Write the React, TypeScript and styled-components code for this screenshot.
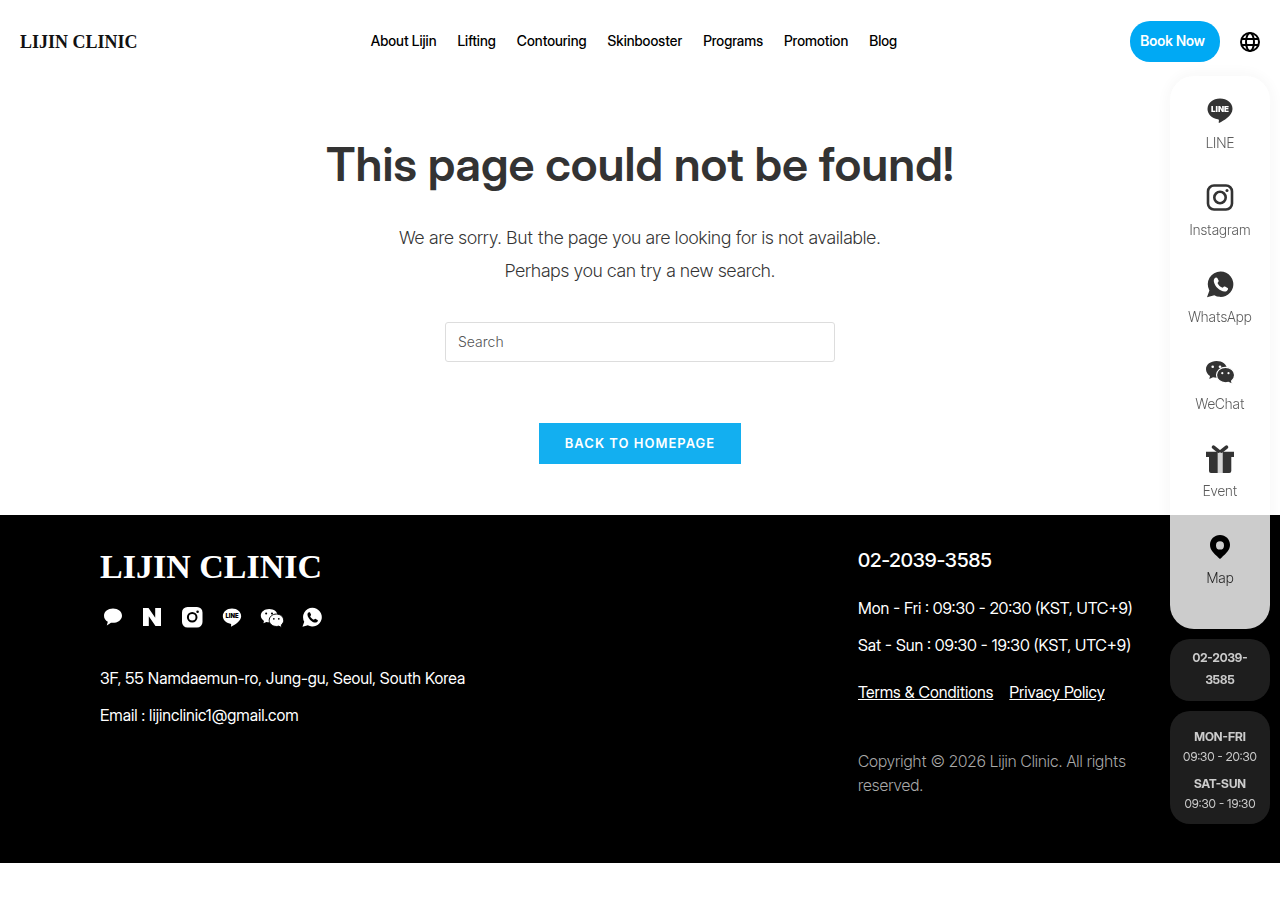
import React from "react";
import styled, { createGlobalStyle, css } from "styled-components";
import { SiNaver } from "react-icons/si";

const textFace = css`font-family: Inter, "Liberation Sans", sans-serif;`;
const lightFace = css`font-family: "Inter Tight", Inter, "Liberation Sans", sans-serif;`;

const GlobalStyle = createGlobalStyle`
  *, *::before, *::after { box-sizing: border-box; }
  body {
    margin: 0;
    background: #fff;
    color: #333;
    font-family: "Inter Display", Inter, "Liberation Sans", sans-serif;
    font-size: 16px;
    font-weight: 400;
  }
  a { color: inherit; text-decoration: none; }
  p, h1, ul { margin: 0; padding: 0; }
  svg { display: block; }
`;

const Header = styled.header`
  display: flex;
  align-items: center;
  justify-content: space-between;
  height: 83px;
  padding: 0 20px;
`;

const Wordmark = styled.a<{ $large?: boolean }>`
  font-family: "Liberation Serif", serif;
  font-weight: 700;
  white-space: nowrap;
  ${({ $large }) =>
    $large
      ? css`
          display: block;
          font-size: 34px;
          line-height: 40px;
          color: #fff;
        `
      : css`
          font-size: 18px;
          line-height: 24px;
          color: #111;
        `}
`;

const Nav = styled.nav`
  display: flex;
  gap: 21px;
  padding-bottom: 1px;
`;

const NavLink = styled.a`
  color: #000;
  font-size: 14px;
  font-weight: 500;
  line-height: 20px;
  white-space: nowrap;
`;

const HeaderActions = styled.div`
  display: flex;
  align-items: center;
  gap: 20px;
`;

const BookLink = styled.a`
  padding: 10px 15px 11px 10px;
  border-radius: 20px;
  background: #00a9f4;
  color: #fff;
  font-size: 14px;
  font-weight: 600;
  line-height: 20px;
`;

const LanguageButton = styled.button`
  padding: 0;
  border: 0;
  background: none;
  color: #000;
  cursor: pointer;
`;

const Main = styled.main`
  display: flex;
  flex-direction: column;
  align-items: center;
  padding: 50px 20px 51px;
  text-align: center;
`;

const Title = styled.h1`
  font-size: 47px;
  font-weight: 600;
  line-height: 62px;
`;

const Message = styled.p`
  ${lightFace}
  margin-top: 26px;
  font-size: 18px;
  font-weight: 300;
  line-height: 33px;
`;

const SearchForm = styled.form`
  width: 100%;
  max-width: 390px;
  margin-top: 35px;
`;

const SearchInput = styled.input`
  ${textFace}
  display: block;
  width: 100%;
  height: 40px;
  padding: 0 12px 2px;
  border: 1px solid #ddd;
  border-radius: 3px;
  background: #fff;
  color: #333;
  font-size: 14px;
  font-weight: 300;
  &::placeholder { color: #555; opacity: 1; }
`;

const HomeLink = styled.a`
  ${textFace}
  margin-top: 61px;
  padding: 10px 26px 11px;
  background: #13aff0;
  color: #fff;
  font-size: 13px;
  font-weight: 600;
  line-height: 20px;
  letter-spacing: 1px;
  text-transform: uppercase;
`;

const Footer = styled.footer`
  --cut: #000;
  display: grid;
  grid-template-columns: 1fr 322px;
  min-height: 348px;
  padding: 30px 100px;
  background: #000;
  color: #fff;
`;

const Social = styled.ul`
  display: flex;
  gap: 16px;
  margin: 18px 0 37px;
  list-style: none;
`;

const SocialLink = styled.a`
  display: flex;
  align-items: center;
  justify-content: center;
  width: 24px;
  height: 24px;
`;

const FooterBrand = styled.div`
  padding-top: 2px;
`;

const FooterText = styled.p`
  margin-bottom: 13px;
  font-size: 16px;
  line-height: 24px;
`;

const Phone = styled.p`
  ${lightFace}
  margin-bottom: 21px;
  font-size: 20px;
  font-weight: 500;
  line-height: 30px;
`;

const Legal = styled.nav`
  display: flex;
  gap: 16px;
  margin: 23px 0 45px;
  font-size: 16px;
  line-height: 24px;
  a { text-decoration: underline; }
`;

const Copyright = styled.p`
  ${lightFace}
  color: #aaa;
  font-size: 16px;
  font-weight: 300;
  line-height: 24px;
`;

const Dock = styled.aside`
  --cut: #fff;
  position: fixed;
  top: 50%;
  right: 10px;
  display: flex;
  flex-direction: column;
  gap: 10px;
  width: 100px;
  transform: translateY(-50%);
  opacity: 0.8;
  text-align: center;
`;

const Channels = styled.nav`
  display: flex;
  flex-direction: column;
  gap: 27px;
  padding: 19px 0 39px;
  border-radius: 24px;
  background: #fff;
  box-shadow: 0 0 20px rgba(0, 0, 0, 0.06);
`;

const Channel = styled.a`
  ${lightFace}
  display: flex;
  flex-direction: column;
  align-items: center;
  gap: 6px;
  color: #333;
  font-size: 14px;
  font-weight: 300;
  line-height: 24px;
  svg { color: #000; }
`;

const DockCard = styled.div`
  padding: 8px 10px 10px;
  border-radius: 20px;
  background: #262626;
  color: #fff;
  font-size: 12px;
  line-height: 22px;
`;

const HoursCard = styled(DockCard)`
  padding: 16px 0 10px;
  line-height: 20px;
  p + p { margin-top: 7px; }
`;

type IconProps = { size?: number };

const GlobeIcon = () => (
  <svg width="20" height="20" viewBox="0 0 20 20" fill="none" stroke="currentColor" strokeWidth="2" aria-hidden="true">
    <circle cx="10" cy="10" r="9" />
    <ellipse cx="10" cy="10" rx="4" ry="9" />
    <path d="M1.700 7h16.600M1.700 13h16.600" />
  </svg>
);

const LineIcon = ({ size = 30 }: IconProps) => (
  <svg width={size} height={size} viewBox="0 0 30 30" aria-hidden="true">
    <path fill="currentColor" d="M15 3.500C8 3.500 2.500 8 2.500 14c0 5 4.300 9.300 10.300 10.200 1.500.3 1.200 1.300.9 3-.1.600.2.900.8.600C18 26 27.500 21 27.500 14 27.500 8 22 3.500 15 3.500Z" />
    <text x="15" y="16.500" textAnchor="middle" fill="var(--cut)" fontFamily="Inter, sans-serif" fontSize="8" fontWeight="900">LINE</text>
  </svg>
);

const InstagramIcon = () => (
  <svg width="30" height="30" viewBox="0 0 30 30" aria-hidden="true">
    <rect x="3" y="3.500" width="24" height="24" rx="6" fill="none" stroke="currentColor" strokeWidth="2.600" />
    <circle cx="15" cy="15.500" r="5.700" fill="none" stroke="currentColor" strokeWidth="2.600" />
    <circle cx="22" cy="8.500" r="1.500" fill="currentColor" />
  </svg>
);

const InstagramSolidIcon = () => (
  <svg width="24" height="24" viewBox="0 0 24 24" aria-hidden="true">
    <rect x="2" y="2" width="20.500" height="20.500" rx="5.500" fill="currentColor" />
    <circle cx="12.200" cy="12.200" r="4.300" fill="none" stroke="var(--cut)" strokeWidth="2" />
    <circle cx="17.600" cy="6.800" r="1.300" fill="var(--cut)" />
  </svg>
);

const WhatsappIcon = ({ size = 30 }: IconProps) => (
  <svg width={size} height={size} viewBox="0 0 30 30" aria-hidden="true">
    <path fill="currentColor" d="M15.500 2.500A12.700 12.700 0 1 1 9.300 26.200L2 28.200 4.400 21.400A12.700 12.700 0 0 1 15.500 2.500Z" />
    <path fill="var(--cut)" d="M9.300 9.700c.9-1.300 2.300-1.700 3-.7l1.300 2.600c.3.800-.1 1.300-1.100 2.300.9 2.200 2.800 3.900 5.200 4.800 1-.9 1.500-1.400 2.300-1.100l2.600 1.400c.9.600.5 1.900-.8 2.900-2.200 1.700-6.300.1-9.300-2.900S7.900 11.900 9.300 9.700Z" />
  </svg>
);

const WechatIcon = ({ size = 30 }: IconProps) => (
  <svg width={size} height={size} viewBox="0 0 30 30" aria-hidden="true">
    <g fill="currentColor">
      <path d="M11.500 5C5.600 5 1 8.600 1 13.200c0 2.900 1.600 5.200 4 6.700L4.300 22.900 8 21.300c1.100.3 2.300.4 3.500.4C17.300 21.700 22 17.900 22 13.200S17.300 5 11.500 5Z" />
      <path stroke="var(--cut)" strokeWidth="1.200" d="M20.500 11.300c-5 0-9 3.500-9 7.800s4 7.700 9 7.700c1 0 2-.1 2.900-.4L27.400 28.300 26.600 24.900c1.900-1.400 3-3.400 3-5.800 0-4.300-4.100-7.800-9.100-7.800Z" />
    </g>
    <g fill="var(--cut)">
      <circle cx="7.700" cy="10.700" r="1.300" />
      <circle cx="15" cy="10.700" r="1.300" />
      <circle cx="17.300" cy="17.200" r="1.100" />
      <circle cx="23.500" cy="17.200" r="1.100" />
    </g>
  </svg>
);

const PinIcon = () => (
  <svg width="30" height="30" viewBox="0 0 30 30" aria-hidden="true">
    <path fill="currentColor" fillRule="evenodd" d="M15 5C9.400 5 5 9.300 5 14.800C5 20 8.500 23.300 15 29C21.500 23.300 25 20 25 14.800C25 9.300 20.600 5 15 5ZM15 11.200A4 4.200 0 1 1 15 19.600A4 4.200 0 1 1 15 11.200Z" />
  </svg>
);

const GiftIcon = () => (
  <svg width="30" height="30" viewBox="0 0 30 30" aria-hidden="true">
    <g fill="currentColor">
      <path d="M1 8.700h11.700v5.300H1zM17.700 8.700h11.300v5.300H17.700zM4 14h8.700v16H6a2 2 0 0 1-2-2zM17.700 14h8.600v14a2 2 0 0 1-2 2h-6.600z" />
      <path d="M12.700 8.700h5v21.300h-5z" opacity=".2" />
    </g>
    <path d="M8.500 4.200 13.500 8.200M21.500 4.200 16.500 8.200" stroke="currentColor" strokeWidth="3.600" strokeLinecap="round" />
  </svg>
);

const TalkIcon = () => (
  <svg width="20" height="20" viewBox="0 0 20 20" aria-hidden="true">
    <path fill="currentColor" d="M11 1.500C6 1.500 2 4.600 2 8.700c0 2.700 1.500 4.900 3.800 6.100L4.800 18.500 9 15.800c6 .6 11-2.600 11-7.100 0-4.100-4-7.200-9-7.200Z" />
  </svg>
);

const navItems = ["About Lijin", "Lifting", "Contouring", "Skinbooster", "Programs", "Promotion", "Blog"];

const channels = [
  { label: "LINE", icon: <LineIcon /> },
  { label: "Instagram", icon: <InstagramIcon /> },
  { label: "WhatsApp", icon: <WhatsappIcon /> },
  { label: "WeChat", icon: <WechatIcon /> },
  { label: "Event", icon: <GiftIcon /> },
  { label: "Map", icon: <PinIcon /> },
];

const socials = [
  { label: "KakaoTalk", icon: <TalkIcon /> },
  { label: "Naver", icon: <SiNaver size={18} /> },
  { label: "Instagram", icon: <InstagramSolidIcon /> },
  { label: "LINE", icon: <LineIcon size={22} /> },
  { label: "WeChat", icon: <WechatIcon size={26} /> },
  { label: "WhatsApp", icon: <WhatsappIcon size={22} /> },
];

export default function App() {
  return (
    <>
      <GlobalStyle />
      <Header>
        <Wordmark href="#">LIJIN CLINIC</Wordmark>
        <Nav>
          {navItems.map((item) => (
            <NavLink key={item} href="#">{item}</NavLink>
          ))}
        </Nav>
        <HeaderActions>
          <BookLink href="#">Book Now</BookLink>
          <LanguageButton type="button" aria-label="Language">
            <GlobeIcon />
          </LanguageButton>
        </HeaderActions>
      </Header>
      <Main>
        <Title>This page could not be found!</Title>
        <Message>
          We are sorry. But the page you are looking for is not available.
          <br />
          Perhaps you can try a new search.
        </Message>
        <SearchForm role="search">
          <SearchInput type="search" placeholder="Search" aria-label="Search" />
        </SearchForm>
        <HomeLink href="#">Back to homepage</HomeLink>
      </Main>
      <Footer>
        <FooterBrand>
          <Wordmark $large href="#">LIJIN CLINIC</Wordmark>
          <Social>
            {socials.map(({ label, icon }) => (
              <li key={label}>
                <SocialLink href="#" aria-label={label}>{icon}</SocialLink>
              </li>
            ))}
          </Social>
          <FooterText>3F, 55 Namdaemun-ro, Jung-gu, Seoul, South Korea</FooterText>
          <FooterText>Email : lijinclinic1@gmail.com</FooterText>
        </FooterBrand>
        <div>
          <Phone>02-2039-3585</Phone>
          <FooterText>Mon - Fri : 09:30 - 20:30 (KST, UTC+9)</FooterText>
          <FooterText>Sat - Sun : 09:30 - 19:30 (KST, UTC+9)</FooterText>
          <Legal>
            <a href="#">Terms &amp; Conditions</a>
            <a href="#">Privacy Policy</a>
          </Legal>
          <Copyright>Copyright © 2026 Lijin Clinic. All rights reserved.</Copyright>
        </div>
      </Footer>
      <Dock>
        <Channels>
          {channels.map(({ label, icon }) => (
            <Channel key={label} href="#">
              {icon}
              {label}
            </Channel>
          ))}
        </Channels>
        <DockCard><strong>02-2039-3585</strong></DockCard>
        <HoursCard>
          <p><strong>MON-FRI</strong><br />09:30 - 20:30</p>
          <p><strong>SAT-SUN</strong><br />09:30 - 19:30</p>
        </HoursCard>
      </Dock>
    </>
  );
}
